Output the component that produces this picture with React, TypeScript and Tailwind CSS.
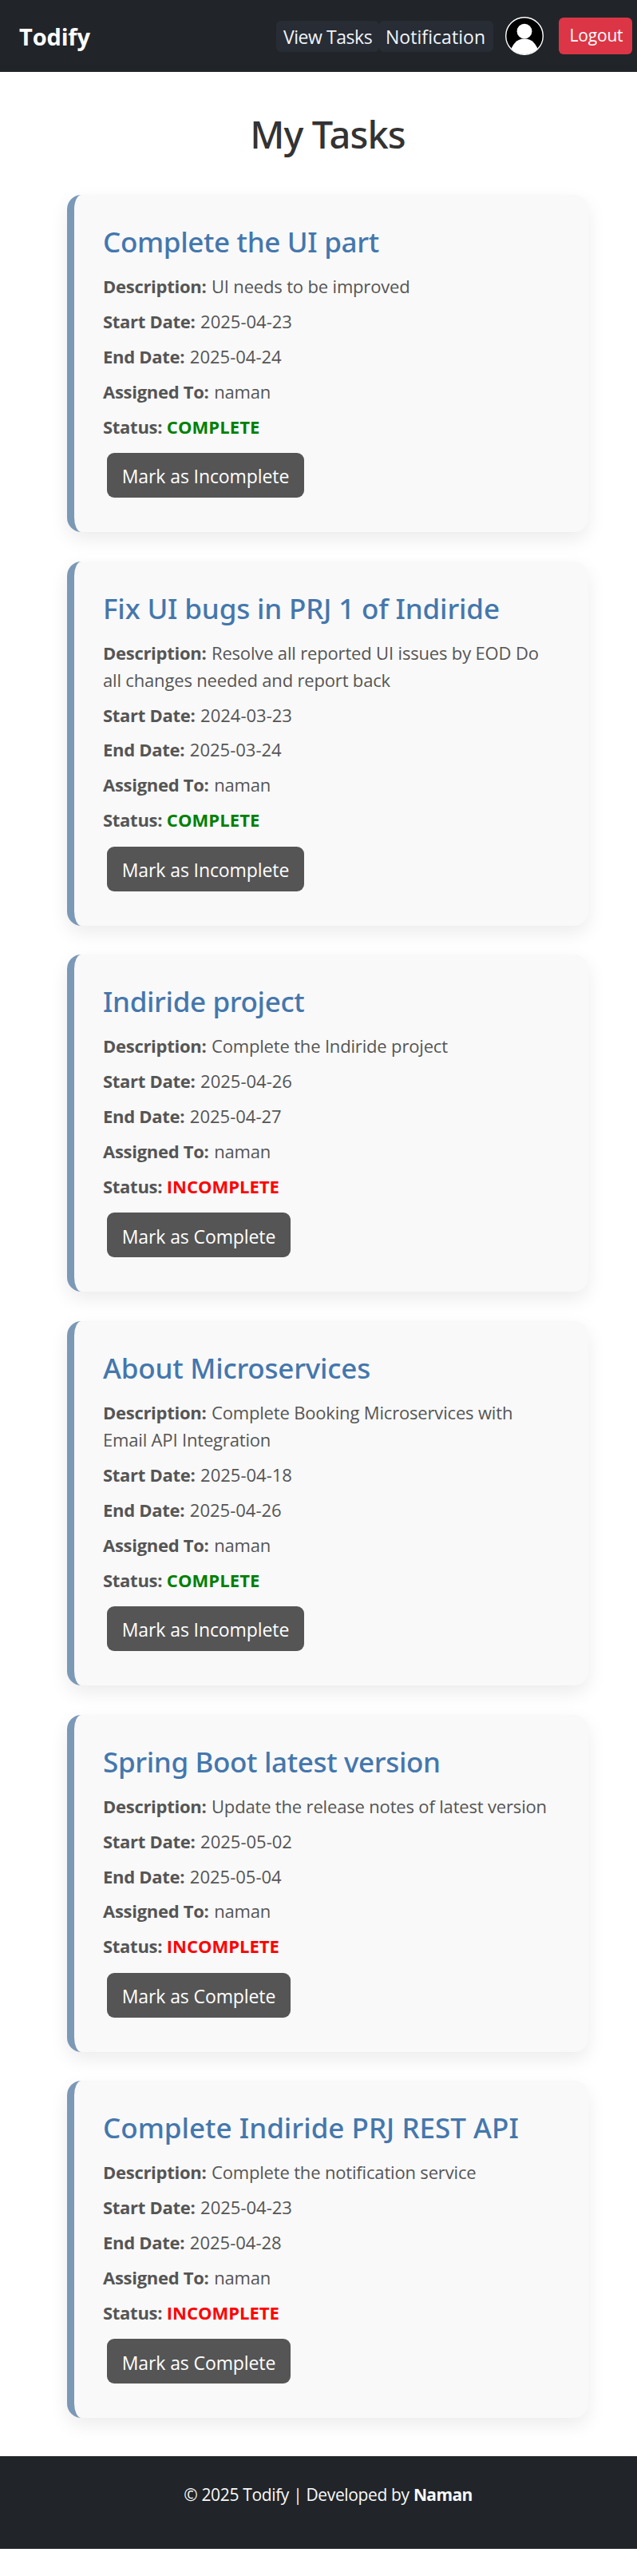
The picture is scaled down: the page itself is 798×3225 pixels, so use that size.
import React from "react";

type Task = {
  title: string;
  tracking: string;
  description: string;
  start: string;
  end: string;
  assignee: string;
  complete: boolean;
};

const tasks: Task[] = [
  { title: "Complete the UI part", tracking: "tracking-[-0.33px]", description: "UI needs to be improved", start: "2025-04-23", end: "2025-04-24", assignee: "naman", complete: true },
  { title: "Fix UI bugs in PRJ 1 of Indiride", tracking: "tracking-[-0.15px]", description: "Resolve all reported UI issues by EOD Do all changes needed and report back", start: "2024-03-23", end: "2025-03-24", assignee: "naman", complete: true },
  { title: "Indiride project", tracking: "tracking-[-0.35px]", description: "Complete the Indiride project", start: "2025-04-26", end: "2025-04-27", assignee: "naman", complete: false },
  { title: "About Microservices", tracking: "tracking-[-0.2px]", description: "Complete Booking Microservices with Email API Integration", start: "2025-04-18", end: "2025-04-26", assignee: "naman", complete: true },
  { title: "Spring Boot latest version", tracking: "tracking-[-0.35px]", description: "Update the release notes of latest version", start: "2025-05-02", end: "2025-05-04", assignee: "naman", complete: false },
  { title: "Complete Indiride PRJ REST API", tracking: "tracking-[0.02px]", description: "Complete the notification service", start: "2025-04-23", end: "2025-04-28", assignee: "naman", complete: false },
];

function Field({ label, children }: { label: string; children: React.ReactNode }) {
  return (
    <p className="mb-[10px] text-[22px] leading-[33.9px] tracking-[-0.17px]">
      <strong className="mr-px font-bold tracking-[-0.28px]">{label}:</strong> {children}
    </p>
  );
}

function TaskCard({ task }: { task: Task }) {
  return (
    <article className="flex flex-col items-start rounded-[18px] border-l-[9px] border-[#7b98b7] bg-[#f9f9f9] px-9 pt-[37px] pb-[43px] text-[#555] shadow-[0_9px_23px_rgba(0,0,0,0.08)]">
      <h3 className={`mb-[18px] font-['Noto_Sans',sans-serif] text-[35px] leading-[43px] font-medium text-[#4477ad] ${task.tracking}`}>
        {task.title}
      </h3>
      <Field label="Description">{task.description}</Field>
      <Field label="Start Date">
        <span className="tracking-normal">{task.start}</span>
      </Field>
      <Field label="End Date">
        <span className="tracking-normal">{task.end}</span>
      </Field>
      <Field label="Assigned To">{task.assignee}</Field>
      <Field label="Status">
        <span className={task.complete ? "-ml-px font-bold tracking-[0.1px] text-[#008000]" : "-ml-px font-bold tracking-normal text-[#ff0000]"}>
          {task.complete ? "COMPLETE" : "INCOMPLETE"}
        </span>
      </Field>
      <button
        className={
          task.complete
            ? "mt-[5.5px] ml-[5px] h-14 w-[247px] rounded-[9px] bg-[#555] pt-[3px] text-[23px] tracking-[-0.1px] text-white"
            : "mt-[5.5px] ml-[5px] h-14 w-[230px] rounded-[9px] bg-[#555] pt-[3px] text-[23px] tracking-[-0.1px] text-white"
        }
      >
        {task.complete ? "Mark as Incomplete" : "Mark as Complete"}
      </button>
    </article>
  );
}

function Avatar() {
  return (
    <svg viewBox="0 0 48 48" className="ml-[15px] size-12 shrink-0">
      <defs>
        <clipPath id="avatar-clip">
          <circle cx="24" cy="24" r="23" />
        </clipPath>
      </defs>
      <circle cx="24" cy="24" r="23.3" fill="#000" stroke="#fff" strokeWidth="1.4" />
      <circle cx="24" cy="18.2" r="9.4" fill="#fff" />
      <ellipse cx="24" cy="45" rx="17" ry="17.5" fill="#fff" clipPath="url(#avatar-clip)" />
    </svg>
  );
}

export default function App() {
  return (
    <div className="min-h-[3225px] bg-white font-['Open_Sans',sans-serif]">
      <header className="flex h-[90px] items-center border-b border-[#1b1e22] bg-[#212529] pr-[6px] pl-6">
        <a className="pt-[3px] text-[29px] leading-10 font-bold tracking-[-0.15px] text-white">Todify</a>
        <nav className="ml-auto flex items-center text-[23px] leading-[41px] text-[#f0f4fa]">
          <a className="mt-px h-[39px] w-[129px] rounded-[6px] bg-[#282c34] pl-[9px] tracking-[-0.45px]">View Tasks</a>
          <a className="mt-px h-[39px] w-[143px] rounded-[6px] bg-[#282c34] pl-[8px] tracking-[0.05px]">Notification</a>
        </nav>
        <Avatar />
        <button className="ml-[19px] h-[46px] w-[92px] rounded-[6px] bg-[#dc3545] pt-px pl-[2px] text-[21px] tracking-[-0.2px] text-white">
          Logout
        </button>
      </header>

      <main className="pt-[49px] pr-[61px] pl-[84px]">
        <h2 className="mb-[47px] text-center font-['Noto_Sans',sans-serif] text-[47px] leading-[58px] font-medium tracking-[-0.9px] text-[#333]">
          My Tasks
        </h2>
        <div className="flex flex-col gap-[36.7px]">
          {tasks.map((task) => (
            <TaskCard key={task.title} task={task} />
          ))}
        </div>
      </main>

      <footer className="mt-12 h-[116px] bg-[#212529] pt-8 pl-6 text-center text-[21px] leading-8 tracking-[-0.35px] text-[#f8f9fa]">
        © 2025 Todify | Developed by <strong className="font-bold tracking-[-0.6px]">Naman</strong>
      </footer>
    </div>
  );
}
